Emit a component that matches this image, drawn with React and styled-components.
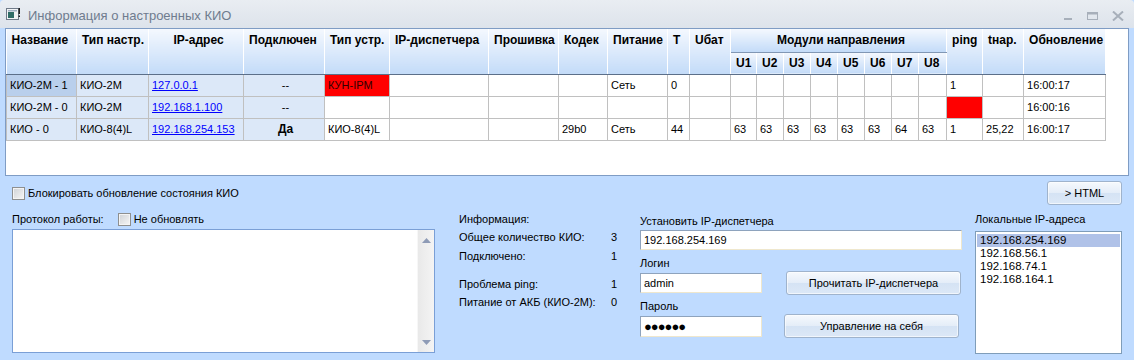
import React from "react"
import styled, { createGlobalStyle } from "styled-components"

const GlobalStyle = createGlobalStyle`
  html, body {
    margin: 0;
    padding: 0;
    background: #bfdbff;
  }
  body {
    font-family: "Liberation Sans", Arial, sans-serif;
    font-size: 11px;
    color: #000;
  }
`

const COLS = [70, 72, 95, 81, 65, 99, 70, 49, 60, 22, 41, 26, 27, 27, 27, 27, 27, 27, 28, 36, 41, 82]

const ROWS = [
  {
    name: "КИО-2М - 1",
    type: "КИО-2М",
    ip: "127.0.0.1",
    conn: "--",
    dev: "КУН-IPM",
    devAlarm: true,
    codec: "",
    power: "Сеть",
    t: "0",
    u: ["", "", "", "", "", "", "", ""],
    ping: "1",
    tnar: "",
    upd: "16:00:17",
    selected: true,
  },
  {
    name: "КИО-2М - 0",
    type: "КИО-2М",
    ip: "192.168.1.100",
    conn: "--",
    dev: "",
    codec: "",
    power: "",
    t: "",
    u: ["", "", "", "", "", "", "", ""],
    ping: "",
    pingAlarm: true,
    tnar: "",
    upd: "16:00:16",
  },
  {
    name: "КИО - 0",
    type: "КИО-8(4)L",
    ip: "192.168.254.153",
    conn: "Да",
    connBold: true,
    dev: "КИО-8(4)L",
    codec: "29b0",
    power: "Сеть",
    t: "44",
    u: ["63", "63", "63", "63", "63", "63", "64", "63"],
    ping: "1",
    tnar: "25,22",
    upd: "16:00:17",
  },
]

const LOCAL_IPS = ["192.168.254.169", "192.168.56.1", "192.168.74.1", "192.168.164.1"]

const Window = styled.div`
  width: 1134px;
  height: 360px;
  overflow: hidden;
  background: #bfdbff;
`

const TitleBar = styled.div`
  height: 28px;
  display: flex;
  align-items: center;
  padding: 0 10px 0 6px;
  box-sizing: border-box;
  background: linear-gradient(#e9edf2, #dde3eb);
  border-top-left-radius: 4px;
  border-top-right-radius: 4px;
`

const Title = styled.span`
  flex: 1;
  margin-left: 7px;
  padding-top: 3px;
  font-size: 13px;
  color: #6f7c8e;
`

const Controls = styled.div`
  display: flex;
  align-items: center;
  gap: 14px;
  padding-top: 4px;
`

const GridFrame = styled.div`
  margin: 0 5px;
  height: 148px;
  box-sizing: border-box;
  border: 1px solid #7f9cc4;
  background: #fff;
  overflow: hidden;
`

const Table = styled.table`
  border-collapse: collapse;
  table-layout: fixed;
  width: 1099px;
  border-right: 1px solid #c0c0c0;
`

const Head = styled.th`
  height: ${(p) => p.$h || 22}px;
  padding: ${(p) => (p.$top ? "4px 0 0 5px" : "0 0 0 5px")};
  vertical-align: ${(p) => (p.$top ? "top" : "middle")};
  text-align: ${(p) => p.$align || "left"};
  font-size: 12px;
  font-weight: bold;
  white-space: nowrap;
  overflow: hidden;
  background: linear-gradient(#f4f8fe, #c3dbf8);
  border-right: 1px solid #fff;
  border-bottom: 1px solid ${(p) => (p.$group ? "#8197b4" : "#5c6f89")};
  box-sizing: border-box;
`

const CELL_BG = {
  info: "#dce8f8",
  selected: "#b9cfec",
  alarm: "#ff0000",
}

const Cell = styled.td`
  height: 21px;
  padding: 0 0 0 3px;
  border: 1px solid #c0c0c0;
  background: ${(p) => CELL_BG[p.$tone] || "#fff"};
  color: ${(p) => (p.$tone === "alarm" ? "#300000" : "#000")};
  text-align: ${(p) => p.$align || "left"};
  font-weight: ${(p) => (p.$bold ? "bold" : "normal")};
  font-size: ${(p) => (p.$bold ? "12px" : "11px")};
  white-space: nowrap;
  overflow: hidden;
`

const Link = styled.a`
  color: #0000ff;
  text-decoration: underline;
`

const Panel = styled.div`
  padding: 0 12px;
`

const TopRow = styled.div`
  display: flex;
  align-items: center;
  justify-content: space-between;
  margin-top: 5px;
  height: 24px;
`

const CheckLabel = styled.label`
  display: flex;
  align-items: center;
  gap: 3px;
  margin-left: ${(p) => p.$offset || 0}px;
`

const Box = styled.span`
  width: 11px;
  height: 11px;
  border: 1px solid #8e8f8f;
  background: linear-gradient(135deg, #cfd2d6, #f6f6f6);
  box-shadow: inset 0 0 0 1px #f4f4f4;
`

const Button = styled.button`
  width: ${(p) => p.$w || 175}px;
  height: 24px;
  margin-left: ${(p) => p.$shift || 0}px;
  font-family: "Liberation Sans", Arial, sans-serif;
  font-size: 11px;
  color: #000;
  border: 1px solid #9fb3cc;
  border-radius: 3px;
  background: linear-gradient(#f6f9fd 0%, #e4edf8 50%, #d5e3f4 51%, #dce8f7 100%);
  box-shadow: inset 0 0 0 1px rgba(255, 255, 255, 0.6);
  padding: 0;
`

const MainGrid = styled.div`
  display: grid;
  grid-template-columns: 447px 181px 335px 147px;
  margin-top: 6px;
`

const Column = styled.div`
  display: flex;
  flex-direction: column;
`

const LabelRow = styled.div`
  display: flex;
  align-items: center;
  height: 16px;
  margin-top: ${(p) => p.$mt || 0}px;
`

const LogBox = styled.div`
  margin-top: 2px;
  width: 423px;
  height: 124px;
  box-sizing: border-box;
  border: 1px solid #7a9fd6;
  background: #fff;
  display: flex;
  justify-content: flex-end;
`

const ScrollTrack = styled.div`
  width: 17px;
  display: flex;
  flex-direction: column;
  justify-content: space-between;
  align-items: center;
  padding: 8px 0 7px;
  box-sizing: border-box;
  background: linear-gradient(90deg, #e9e9e9, #f4f4f4);
  border-left: 1px solid #f7f7f7;
`

const InfoLine = styled.div`
  display: grid;
  grid-template-columns: 146px 12px;
  height: 16px;
  align-items: center;
  margin-top: ${(p) => p.$mt || 0}px;
`

const Value = styled.span`
  text-align: right;
`

const Input = styled.div`
  width: ${(p) => p.$w || 322}px;
  height: ${(p) => p.$h || 20}px;
  box-sizing: border-box;
  margin-top: ${(p) => p.$mt || 0}px;
  padding-left: 3px;
  display: flex;
  align-items: center;
  background: #fff;
  border: 1px solid;
  border-color: #8ea3bd #efe7cd #efe7cd #8ea3bd;
  font-size: ${(p) => (p.$secret ? "13px" : "11px")};
  letter-spacing: ${(p) => (p.$secret ? "-1px" : "0")};
`

const FieldRow = styled.div`
  display: flex;
  align-items: center;
  height: 24px;
`

const ListBox = styled.div`
  margin-top: 4px;
  width: 147px;
  height: 123px;
  box-sizing: border-box;
  border: 1px solid #7f9db9;
  background: #fff;
  padding: 2px 1px;
`

const ListItem = styled.div`
  height: 13px;
  line-height: 13px;
  padding-left: 3px;
  font-size: 11.5px;
  background: ${(p) => (p.$active ? "#b0c2e8" : "transparent")};
`

const AppIcon = () => (
  <svg width="15" height="14" viewBox="0 0 15 14">
    <rect x="0.5" y="1.5" width="12" height="11" fill="#f2f4f6" stroke="#6f7a88" />
    <rect x="2" y="5" width="6" height="6" fill="#2f6c66" />
    <rect x="2" y="3" width="9" height="1.5" fill="#9fb0c2" />
    <rect x="12.5" y="1" width="1.5" height="6" fill="#222" />
    <rect x="12.5" y="8.5" width="1.5" height="1.5" fill="#222" />
  </svg>
)

const Minimize = () => (
  <svg width="10" height="10" viewBox="0 0 10 10">
    <rect x="1" y="7" width="8" height="2" fill="#a7afba" />
  </svg>
)

const Maximize = () => (
  <svg width="11" height="10" viewBox="0 0 11 10">
    <rect x="0.5" y="1.5" width="10" height="7" fill="none" stroke="#a7afba" />
    <rect x="0.5" y="1.5" width="10" height="2" fill="#a7afba" />
  </svg>
)

const Close = () => (
  <svg width="12" height="10" viewBox="0 0 12 10">
    <path d="M1 0.5 L11 9.5 M11 0.5 L1 9.5" stroke="#a7afba" strokeWidth="2" />
  </svg>
)

const Arrow = ({ down }) => (
  <svg width="9" height="5" viewBox="0 0 9 5">
    <path d={down ? "M0 0 H9 L4.5 5 Z" : "M0 5 H9 L4.5 0 Z"} fill="#8e9bb6" />
  </svg>
)

const CheckBox = ({ children, offset }) => (
  <CheckLabel $offset={offset}>
    <Box />
    {children}
  </CheckLabel>
)

const KioTable = () => (
  <Table>
    <colgroup>
      {COLS.map((w, i) => (
        <col key={i} style={{ width: w }} />
      ))}
    </colgroup>
    <thead>
      <tr>
        <Head rowSpan={2} $top $h={45}>Название</Head>
        <Head rowSpan={2} $top>Тип настр.</Head>
        <Head rowSpan={2} $top $align="center">IP-адрес</Head>
        <Head rowSpan={2} $top>Подключен</Head>
        <Head rowSpan={2} $top>Тип устр.</Head>
        <Head rowSpan={2} $top>IP-диспетчера</Head>
        <Head rowSpan={2} $top>Прошивка</Head>
        <Head rowSpan={2} $top>Кодек</Head>
        <Head rowSpan={2} $top>Питание</Head>
        <Head rowSpan={2} $top>T</Head>
        <Head rowSpan={2} $top>Uбат</Head>
        <Head colSpan={8} $group $align="center" $h={23}>Модули направления</Head>
        <Head rowSpan={2} $top>ping</Head>
        <Head rowSpan={2} $top>tнар.</Head>
        <Head rowSpan={2} $top>Обновление</Head>
      </tr>
      <tr>
        {["U1", "U2", "U3", "U4", "U5", "U6", "U7", "U8"].map((u) => (
          <Head key={u} $h={22}>{u}</Head>
        ))}
      </tr>
    </thead>
    <tbody>
      {ROWS.map((r) => (
        <tr key={r.name}>
          <Cell $tone={r.selected ? "selected" : "info"}>{r.name}</Cell>
          <Cell $tone="info">{r.type}</Cell>
          <Cell $tone="info">
            <Link>{r.ip}</Link>
          </Cell>
          <Cell $tone="info" $align="center" $bold={r.connBold}>{r.conn}</Cell>
          <Cell $tone={r.devAlarm ? "alarm" : undefined}>{r.dev}</Cell>
          <Cell />
          <Cell />
          <Cell>{r.codec}</Cell>
          <Cell>{r.power}</Cell>
          <Cell>{r.t}</Cell>
          <Cell />
          {r.u.map((v, i) => (
            <Cell key={i}>{v}</Cell>
          ))}
          <Cell $tone={r.pingAlarm ? "alarm" : undefined}>{r.ping}</Cell>
          <Cell>{r.tnar}</Cell>
          <Cell>{r.upd}</Cell>
        </tr>
      ))}
    </tbody>
  </Table>
)

export default function App() {
  return (
    <Window>
      <GlobalStyle />
      <TitleBar>
        <AppIcon />
        <Title>Информация о настроенных КИО</Title>
        <Controls>
          <Minimize />
          <Maximize />
          <Close />
        </Controls>
      </TitleBar>

      <GridFrame>
        <KioTable />
      </GridFrame>

      <Panel>
        <TopRow>
          <CheckBox>Блокировать обновление состояния КИО</CheckBox>
          <Button $w={75}>&gt; HTML</Button>
        </TopRow>

        <MainGrid>
          <Column>
            <LabelRow>
              Протокол работы:
              <CheckBox offset={14}>Не обновлять</CheckBox>
            </LabelRow>
            <LogBox>
              <ScrollTrack>
                <Arrow />
                <Arrow down />
              </ScrollTrack>
            </LogBox>
          </Column>

          <Column>
            <LabelRow>Информация:</LabelRow>
            <InfoLine $mt={2}>
              <span>Общее количество КИО:</span>
              <Value>3</Value>
            </InfoLine>
            <InfoLine $mt={3}>
              <span>Подключено:</span>
              <Value>1</Value>
            </InfoLine>
            <InfoLine $mt={12}>
              <span>Проблема ping:</span>
              <Value>1</Value>
            </InfoLine>
            <InfoLine $mt={2}>
              <span>Питание от АКБ (КИО-2М):</span>
              <Value>0</Value>
            </InfoLine>
          </Column>

          <Column>
            <LabelRow $mt={2}>Установить IP-диспетчера</LabelRow>
            <Input $mt={1}>192.168.254.169</Input>
            <LabelRow $mt={5}>Логин</LabelRow>
            <FieldRow>
              <Input $w={122}>admin</Input>
              <Button $shift={24}>Прочитать IP-диспетчера</Button>
            </FieldRow>
            <LabelRow $mt={3}>Пароль</LabelRow>
            <FieldRow>
              <Input $w={122} $h={21} $secret>●●●●●●</Input>
              <Button $shift={22}>Управление на себя</Button>
            </FieldRow>
          </Column>

          <Column>
            <LabelRow>Локальные IP-адреса</LabelRow>
            <ListBox>
              {LOCAL_IPS.map((ip, i) => (
                <ListItem key={ip} $active={i === 0}>{ip}</ListItem>
              ))}
            </ListBox>
          </Column>
        </MainGrid>
      </Panel>
    </Window>
  )
}
